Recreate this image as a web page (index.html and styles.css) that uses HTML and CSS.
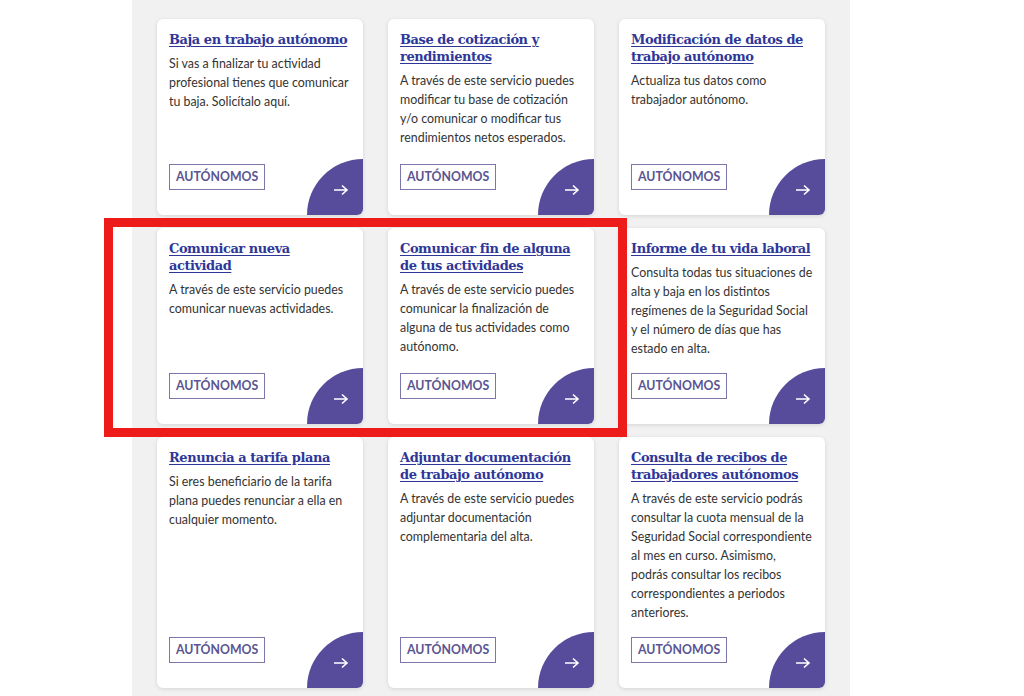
FILE: index.html
```html
<!DOCTYPE html>
<html lang="es">
  <head>
    <meta charset="UTF-8" />
    <meta name="viewport" content="width=device-width, initial-scale=1.0" />
    <title>Autónomos</title>
    <link rel="stylesheet" href="styles.css">
  </head>
  <body>
    <div class="panel">
      <div class="cards">
        <div class="card">
          <a class="card-title" href="#">Baja en trabajo autónomo</a>
          <p class="card-text">Si vas a finalizar tu actividad profesional tienes que comunicar tu baja. Solicítalo aquí.</p>
          <span class="tag">AUTÓNOMOS</span>
          <a class="go" href="#"><svg width="16" height="12" viewBox="0 0 16 12"><path d="M1 6h13M9 1.5l5 4.5-5 4.5" fill="none" stroke="#fff" stroke-width="1.6"/></svg></a>
        </div>
        <div class="card">
          <a class="card-title" href="#">Base de cotización y rendimientos</a>
          <p class="card-text">A través de este servicio puedes modificar tu base de cotización y/o comunicar o modificar tus rendimientos netos esperados.</p>
          <span class="tag">AUTÓNOMOS</span>
          <a class="go" href="#"><svg width="16" height="12" viewBox="0 0 16 12"><path d="M1 6h13M9 1.5l5 4.5-5 4.5" fill="none" stroke="#fff" stroke-width="1.6"/></svg></a>
        </div>
        <div class="card">
          <a class="card-title" href="#">Modificación de datos de trabajo autónomo</a>
          <p class="card-text">Actualiza tus datos como trabajador autónomo.</p>
          <span class="tag">AUTÓNOMOS</span>
          <a class="go" href="#"><svg width="16" height="12" viewBox="0 0 16 12"><path d="M1 6h13M9 1.5l5 4.5-5 4.5" fill="none" stroke="#fff" stroke-width="1.6"/></svg></a>
        </div>

        <div class="card">
          <a class="card-title" href="#">Comunicar nueva actividad</a>
          <p class="card-text">A través de este servicio puedes comunicar nuevas actividades.</p>
          <span class="tag">AUTÓNOMOS</span>
          <a class="go" href="#"><svg width="16" height="12" viewBox="0 0 16 12"><path d="M1 6h13M9 1.5l5 4.5-5 4.5" fill="none" stroke="#fff" stroke-width="1.6"/></svg></a>
        </div>
        <div class="card">
          <a class="card-title" href="#">Comunicar fin de alguna de tus actividades</a>
          <p class="card-text">A través de este servicio puedes comunicar la finalización de alguna de tus actividades como autónomo.</p>
          <span class="tag">AUTÓNOMOS</span>
          <a class="go" href="#"><svg width="16" height="12" viewBox="0 0 16 12"><path d="M1 6h13M9 1.5l5 4.5-5 4.5" fill="none" stroke="#fff" stroke-width="1.6"/></svg></a>
        </div>
        <div class="card">
          <a class="card-title" href="#">Informe de tu vida laboral</a>
          <p class="card-text">Consulta todas tus situaciones de alta y baja en los distintos regímenes de la Seguridad Social y el número de días que has estado en alta.</p>
          <span class="tag">AUTÓNOMOS</span>
          <a class="go" href="#"><svg width="16" height="12" viewBox="0 0 16 12"><path d="M1 6h13M9 1.5l5 4.5-5 4.5" fill="none" stroke="#fff" stroke-width="1.6"/></svg></a>
        </div>

        <div class="card">
          <a class="card-title" href="#">Renuncia a tarifa plana</a>
          <p class="card-text">Si eres beneficiario de la tarifa plana puedes renunciar a ella en cualquier momento.</p>
          <span class="tag">AUTÓNOMOS</span>
          <a class="go" href="#"><svg width="16" height="12" viewBox="0 0 16 12"><path d="M1 6h13M9 1.5l5 4.5-5 4.5" fill="none" stroke="#fff" stroke-width="1.6"/></svg></a>
        </div>
        <div class="card">
          <a class="card-title" href="#">Adjuntar documentación de trabajo autónomo</a>
          <p class="card-text">A través de este servicio puedes adjuntar documentación complementaria del alta.</p>
          <span class="tag">AUTÓNOMOS</span>
          <a class="go" href="#"><svg width="16" height="12" viewBox="0 0 16 12"><path d="M1 6h13M9 1.5l5 4.5-5 4.5" fill="none" stroke="#fff" stroke-width="1.6"/></svg></a>
        </div>
        <div class="card">
          <a class="card-title" href="#">Consulta de recibos de trabajadores autónomos</a>
          <p class="card-text">A través de este servicio podrás consultar la cuota mensual de la Seguridad Social correspondiente al mes en curso. Asimismo, podrás consultar los recibos correspondientes a periodos anteriores.</p>
          <span class="tag">AUTÓNOMOS</span>
          <a class="go" href="#"><svg width="16" height="12" viewBox="0 0 16 12"><path d="M1 6h13M9 1.5l5 4.5-5 4.5" fill="none" stroke="#fff" stroke-width="1.6"/></svg></a>
        </div>
      </div>
    </div>

    <!-- marca roja sobre la segunda fila -->
    <div class="highlight"></div>
  </body>
</html>
```

FILE: styles.css
```css
body {
  margin: 0;
  background: #ffffff;
  font-family: Lato, "Open Sans", sans-serif;
}
.panel {
  margin-left: 132px;
  width: 668px;
  min-height: 696px;
  padding: 19px 25px 0 25px;
  background: #f1f1f1;
}
.cards {
  display: grid;
  grid-template-columns: 206px 206px 206px;
  column-gap: 25px;
  row-gap: 13px;
}
.card {
  position: relative;
  display: flex;
  flex-direction: column;
  align-items: flex-start;
  min-height: 196px;
  box-sizing: border-box;
  padding: 12px 10px 25px 12px;
  background: #ffffff;
  border-radius: 6px;
  overflow: hidden;
  box-shadow: 0 1px 4px rgba(0, 0, 0, 0.12);
}
.card-title {
  font-family: "DejaVu Serif", serif;
  font-size: 13px;
  font-weight: bold;
  line-height: 17px;
  color: #2e3798;
  text-decoration: underline;
  text-underline-offset: 2px;
  letter-spacing: -0.45px;
}
.card-text {
  margin: 6px 0 15px 0;
  font-size: 12.4px;
  line-height: 19px;
  color: #333333;
}
.tag {
  margin-top: auto;
  height: 24px;
  line-height: 24px;
  padding: 0 6px;
  border: 1px solid #7c76aa;
  font-size: 12.3px;
  font-weight: bold;
  color: #5a5592;
}
.go {
  position: absolute;
  right: 0;
  bottom: 0;
  width: 56px;
  height: 56px;
  border-top-left-radius: 56px;
  background: #574c9c;
  display: flex;
  align-items: center;
  justify-content: center;
  padding: 6px 0 0 12px;
  box-sizing: border-box;
}
.highlight {
  position: absolute;
  left: 104px;
  top: 218px;
  width: 505px;
  height: 201px;
  border: 9px solid #ee1b1b;
}
```
